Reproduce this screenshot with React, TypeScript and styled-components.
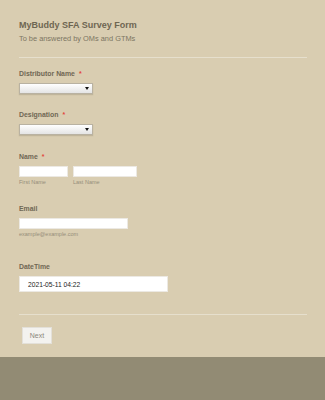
import React from 'react'
import styled, { createGlobalStyle } from 'styled-components'

const GlobalStyle = createGlobalStyle`
  html, body {
    margin: 0;
    padding: 0;
    background: #d9cdb1;
    font-family: 'Liberation Sans', Arial, sans-serif;
  }
`

const Page = styled.div`
  display: flex;
  flex-direction: column;
  min-height: 100vh;
  background: #d9cdb1;
`

const Form = styled.form`
  padding: 19px 18px 13px 19px;
`

const Title = styled.h1`
  margin: 0;
  font-size: 9px;
  line-height: 12px;
  font-weight: bold;
  color: #6e6652;
`

const Subtitle = styled.p`
  margin: 3px 0 0;
  font-size: 7.4px;
  line-height: 10px;
  color: #7c7562;
`

const Divider = styled.hr<{ $top: number }>`
  margin: ${(p) => p.$top}px 0 0;
  border: 0;
  height: 1px;
  background: #e6dfcd;
`

const Field = styled.div<{ $top: number }>`
  margin-top: ${(p) => p.$top}px;
`

const Label = styled.label`
  display: block;
  margin-bottom: 4px;
  font-size: 6.9px;
  line-height: 10px;
  font-weight: bold;
  color: #706754;
`

const Required = styled.span`
  margin-left: 4px;
  color: #e2453c;
`

const SelectBox = styled.div`
  display: flex;
  align-items: center;
  justify-content: flex-end;
  box-sizing: border-box;
  width: 74px;
  height: 11px;
  padding-right: 3px;
  border: 1px solid #b9b2a2;
  background: linear-gradient(#ffffff, #e4e4e4);
  box-shadow: 0 1px 1px rgba(120, 110, 90, 0.25);
`

const InputRow = styled.div`
  display: flex;
  gap: 5px;
`

const Input = styled.div<{ $width: number; $height?: number }>`
  display: flex;
  align-items: center;
  box-sizing: border-box;
  width: ${(p) => p.$width}px;
  height: ${(p) => p.$height ?? 11}px;
  padding-left: 8px;
  border: 1px solid #ece9e3;
  background: #ffffff;
  font-size: 6.7px;
  color: #222222;
`

const Sub = styled.div`
  margin-top: 1px;
  font-size: 5.5px;
  line-height: 8px;
  color: #968e7a;
`

const ButtonRow = styled.div`
  display: flex;
  margin-top: 12px;
  padding-left: 3px;
`

const Button = styled.button`
  box-sizing: border-box;
  width: 30px;
  height: 17px;
  padding: 0;
  border: 1px solid #e3e0d9;
  background: #f3f2ef;
  font-family: 'Liberation Sans', Arial, sans-serif;
  font-size: 7px;
  color: #8c877b;
`

const Footer = styled.div`
  flex: 1;
  background: #928b74;
`

const Arrow = () => (
  <svg width="4" height="3" viewBox="0 0 4 3">
    <path d="M0 0h4L2 3z" fill="#111" />
  </svg>
)

export default function App() {
  return (
    <Page>
      <GlobalStyle />
      <Form>
        <Title>MyBuddy SFA Survey Form</Title>
        <Subtitle>To be answered by OMs and GTMs</Subtitle>
        <Divider $top={13} />

        <Field $top={11}>
          <Label>
            Distributor Name<Required>*</Required>
          </Label>
          <SelectBox>
            <Arrow />
          </SelectBox>
        </Field>

        <Field $top={16}>
          <Label>
            Designation<Required>*</Required>
          </Label>
          <SelectBox>
            <Arrow />
          </SelectBox>
        </Field>

        <Field $top={17}>
          <Label>
            Name<Required>*</Required>
          </Label>
          <InputRow>
            <div>
              <Input $width={49} />
              <Sub>First Name</Sub>
            </div>
            <div>
              <Input $width={64} />
              <Sub>Last Name</Sub>
            </div>
          </InputRow>
        </Field>

        <Field $top={18}>
          <Label>Email</Label>
          <Input $width={109} />
          <Sub>example@example.com</Sub>
        </Field>

        <Field $top={24}>
          <Label>DateTime</Label>
          <Input $width={149} $height={16}>
            2021-05-11 04:22
          </Input>
        </Field>

        <Divider $top={22} />
        <ButtonRow>
          <Button type="button">Next</Button>
        </ButtonRow>
      </Form>
      <Footer />
    </Page>
  )
}
